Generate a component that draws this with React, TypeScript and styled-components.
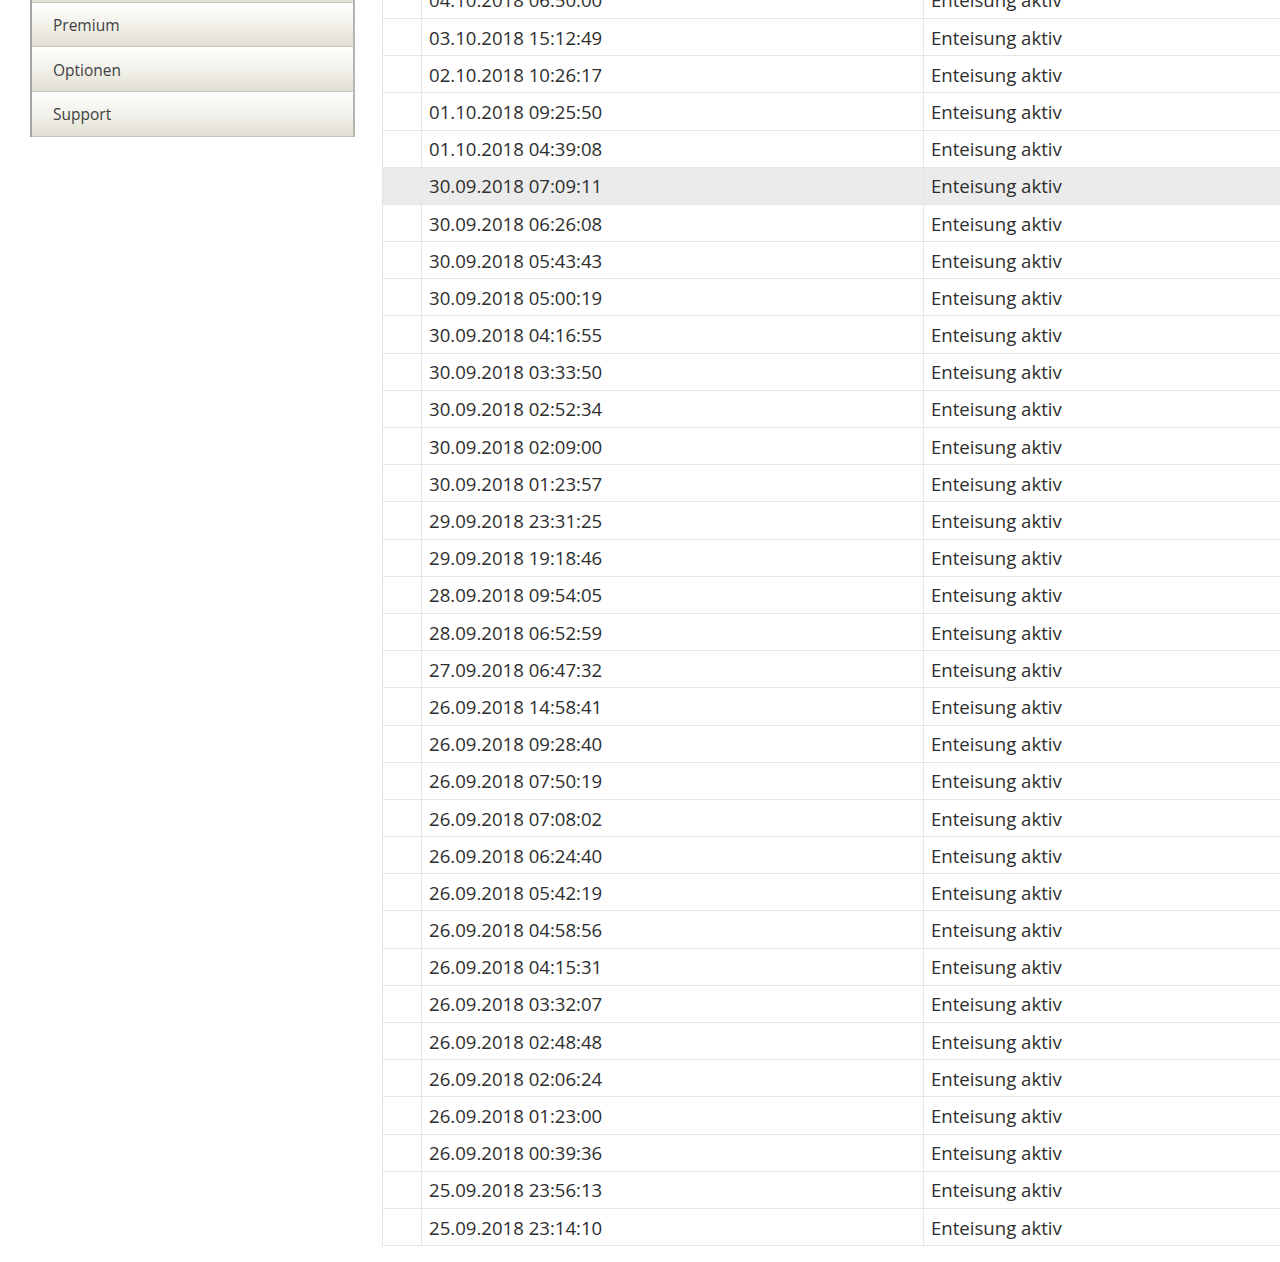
import { createGlobalStyle, styled } from "styled-components";

const GlobalStyle = createGlobalStyle`
    html, body {
        margin: 0;
        padding: 0;
        background: #ffffff;
        overflow: hidden;
    }
    body {
        font-family: "Open Sans", "DejaVu Sans", sans-serif;
        color: #333333;
    }
`;

const Page = styled.div`
    display: flex;
    align-items: flex-start;
    gap: 27px;
    padding-left: 30px;
    margin-top: -42px;
`;

const Sidebar = styled.nav`
    width: 325px;
    flex-shrink: 0;
    display: flex;
    flex-direction: column;
    border-left: 2px solid #a3a3a3;
    border-right: 2px solid #b4b4b0;
    box-sizing: border-box;
`;

const MenuItem = styled.a`
    display: flex;
    align-items: center;
    height: 44.7px;
    box-sizing: border-box;
    padding-left: 21px;
    font-size: 15.5px;
    color: #3f3f3f;
    text-decoration: none;
    background: linear-gradient(to bottom, #fefefc 0%, #f3f2ec 45%, #e2e0d3 100%);
    border-top: 1px solid #ffffff;
    border-bottom: 1px solid #c6c5be;
`;

const Table = styled.div`
    flex: 1;
    min-width: 0;
    margin-top: 23.8px;
    border-left: 1px solid #e4e4e4;
    display: flex;
    flex-direction: column;
`;

const Row = styled.div<{ $active?: boolean }>`
    display: grid;
    grid-template-columns: 39px 502px 1fr;
    height: 37.19px;
    box-sizing: border-box;
    border-bottom: 1px solid #e6e6e6;
    background: ${p => (p.$active ? "#ebebeb" : "#ffffff")};
`;

const Cell = styled.div`
    display: flex;
    align-items: center;
    padding-left: 7px;
    font-size: 18.6px;
    color: #2e2e2e;
    white-space: nowrap;
    overflow: hidden;
    border-right: 1px solid #e6e6e6;
    &:last-child {
        border-right: none;
    }
`;

const menu = ["Historie", "Premium", "Optionen", "Support"];

const times = [
    "04.10.2018 06:50:00",
    "03.10.2018 15:12:49",
    "02.10.2018 10:26:17",
    "01.10.2018 09:25:50",
    "01.10.2018 04:39:08",
    "30.09.2018 07:09:11",
    "30.09.2018 06:26:08",
    "30.09.2018 05:43:43",
    "30.09.2018 05:00:19",
    "30.09.2018 04:16:55",
    "30.09.2018 03:33:50",
    "30.09.2018 02:52:34",
    "30.09.2018 02:09:00",
    "30.09.2018 01:23:57",
    "29.09.2018 23:31:25",
    "29.09.2018 19:18:46",
    "28.09.2018 09:54:05",
    "28.09.2018 06:52:59",
    "27.09.2018 06:47:32",
    "26.09.2018 14:58:41",
    "26.09.2018 09:28:40",
    "26.09.2018 07:50:19",
    "26.09.2018 07:08:02",
    "26.09.2018 06:24:40",
    "26.09.2018 05:42:19",
    "26.09.2018 04:58:56",
    "26.09.2018 04:15:31",
    "26.09.2018 03:32:07",
    "26.09.2018 02:48:48",
    "26.09.2018 02:06:24",
    "26.09.2018 01:23:00",
    "26.09.2018 00:39:36",
    "25.09.2018 23:56:13",
    "25.09.2018 23:14:10",
];

export default function App() {
    return <>
        <GlobalStyle />
        <Page>
            <Sidebar>
                {menu.map(m => <MenuItem key={m} href="#">{m}</MenuItem>)}
            </Sidebar>
            <Table>
                {times.map((t, i) => <Row key={t + i} $active={i === 5}>
                    <Cell />
                    <Cell>{t}</Cell>
                    <Cell>Enteisung aktiv</Cell>
                </Row>)}
            </Table>
        </Page>
    </>;
}
